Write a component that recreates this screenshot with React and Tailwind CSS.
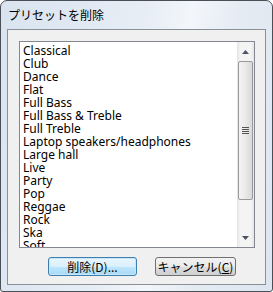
import React from "react";

const presets = [
  "Classical",
  "Club",
  "Dance",
  "Flat",
  "Full Bass",
  "Full Bass & Treble",
  "Full Treble",
  "Laptop speakers/headphones",
  "Large hall",
  "Live",
  "Party",
  "Pop",
  "Reggae",
  "Rock",
  "Ska",
  "Soft",
];

const ArrowUp = () => (
  <svg width="7" height="4" viewBox="0 0 7 4">
    <path d="M3.5 0 L7 4 L0 4 Z" fill="#4d5560" />
  </svg>
);

const ArrowDown = () => (
  <svg width="7" height="4" viewBox="0 0 7 4">
    <path d="M0 0 L7 0 L3.5 4 Z" fill="#4d5560" />
  </svg>
);

const App = () => {
  return (
    <div className="w-[273px] h-[292px] bg-white">
      <div className="w-full h-full flex flex-col border border-[#4a4f55] rounded-t-[7px] rounded-b-[3px] bg-[linear-gradient(100deg,#d9e4f0_0%,#e6edf5_45%,#f3f6fa_60%,#e4ebf3_75%,#dde6f0_100%)]">
        {/* Title */}
        <div
          className="h-[28px] flex items-center pl-[7px] text-[12px] text-black"
          style={{ fontFamily: '"Noto Sans CJK JP", "Noto Sans", sans-serif' }}
        >
          プリセットを削除
        </div>

        {/* Client area */}
        <div className="flex-1 mx-[6px] mb-[6px] border border-[#8a9098] bg-[#f0f0f0] flex flex-col">
          {/* List box */}
          <div className="mt-[11px] ml-[11px] w-[236px] h-[207px] border border-[#828790] bg-white flex">
            <div
              className="flex-1 overflow-hidden pl-[3px] pt-[2px] text-[12px] leading-[13px] text-black"
              style={{ fontFamily: '"Noto Sans", sans-serif' }}
            >
              {presets.map((p) => (
                <div key={p} className="h-[13px] whitespace-nowrap">
                  {p}
                </div>
              ))}
            </div>

            {/* Scrollbar */}
            <div className="w-[17px] flex flex-col bg-[linear-gradient(90deg,#e4e4e4_0%,#f4f4f4_20%,#f4f4f4_80%,#e6e6e6_100%)]">
              <div className="h-[19px] flex items-center justify-center">
                <ArrowUp />
              </div>
              <div className="mx-[1px] h-[139px] border border-[#9a9a9a] rounded-[2px] bg-[linear-gradient(90deg,#f3f3f3_0%,#ececec_40%,#d9d9d9_100%)] flex flex-col items-center justify-center gap-[1px]">
                <div className="w-[7px] h-[1px] bg-[#555]" />
                <div className="w-[7px] h-[1px] bg-[#555]" />
                <div className="w-[7px] h-[1px] bg-[#555]" />
                <div className="w-[7px] h-[1px] bg-[#555]" />
              </div>
              <div className="flex-1" />
              <div className="h-[19px] flex items-center justify-center">
                <ArrowDown />
              </div>
            </div>
          </div>

          {/* Buttons */}
          <div
            className="mt-[9px] ml-[40px] flex gap-[18px] text-[12px] text-black"
            style={{ fontFamily: '"Noto Sans CJK JP", "Noto Sans", sans-serif' }}
          >
            <button className="w-[89px] h-[19px] flex items-center justify-center border border-[#3c7fb1] rounded-[3px] bg-[linear-gradient(180deg,#eaf6fd_0%,#d9f0fc_50%,#bee6fd_51%,#a7d9f5_100%)] shadow-[inset_0_0_0_1px_#c8e6f8]">
              削除(D)...
            </button>
            <button className="w-[81px] h-[19px] flex items-center justify-center border border-[#707070] rounded-[3px] bg-[linear-gradient(180deg,#f2f2f2_0%,#ebebeb_50%,#dddddd_51%,#cfcfcf_100%)]">
              キャンセル(<span className="underline">C</span>)
            </button>
          </div>
        </div>
      </div>
    </div>
  );
};

export default App;
